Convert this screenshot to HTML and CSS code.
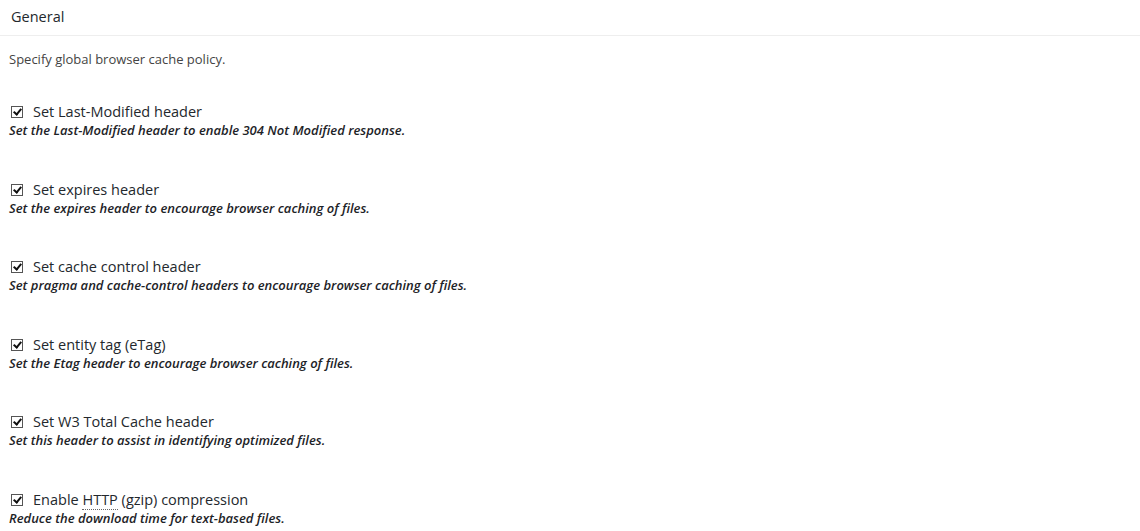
FILE: index.html
```html
<!DOCTYPE html>
<html lang="en">
<head>
  <meta charset="UTF-8" />
  <title>Browser Cache - General</title>
  <link rel="stylesheet" href="styles.css">
</head>
<body>
  <h3 class="box-title">General</h3>

  <div class="box-inside">
    <p class="intro">Specify global browser cache policy.</p>

    <div class="option">
      <label><span class="check"></span>Set Last-Modified header</label>
      <p class="description">Set the Last-Modified header to enable 304 Not Modified response.</p>
    </div>

    <div class="option">
      <label><span class="check"></span>Set expires header</label>
      <p class="description">Set the expires header to encourage browser caching of files.</p>
    </div>

    <div class="option">
      <label><span class="check"></span>Set cache control header</label>
      <p class="description">Set pragma and cache-control headers to encourage browser caching of files.</p>
    </div>

    <div class="option">
      <label><span class="check"></span>Set entity tag (eTag)</label>
      <p class="description">Set the Etag header to encourage browser caching of files.</p>
    </div>

    <div class="option">
      <label><span class="check"></span>Set W3 Total Cache header</label>
      <p class="description">Set this header to assist in identifying optimized files.</p>
    </div>

    <div class="option">
      <label><span class="check"></span>Enable <abbr title="Hypertext Transfer Protocol">HTTP</abbr> (gzip) compression</label>
      <p class="description">Reduce the download time for text-based files.</p>
    </div>
  </div>
</body>
</html>
```

FILE: styles.css
```css
body {
  margin: 0;
  font-family: "Open Sans", sans-serif;
  font-size: 13px;
  color: #444;
  background: #fff;
}

.box-title {
  margin: 0;
  padding: 7px 11px 9px;
  font-size: 14.5px;
  font-weight: normal;
  line-height: 19px;
  color: #23282d;
  border-bottom: 1px solid #eee;
}

.box-inside {
  padding: 0 9px;
}

.intro {
  margin: 13px 0 0;
  font-size: 13px;
  line-height: 20px;
}

.option {
  margin-top: 33px;
}

.option + .option {
  margin-top: 40.6px;
}

.option label {
  display: block;
  font-size: 14.5px;
  line-height: 20px;
  color: #23282d;
}

.check {
  position: relative;
  display: inline-block;
  vertical-align: -1px;
  width: 10px;
  height: 10px;
  margin: 0 10px 0 2px;
  border: 1px solid #555;
  background: #fff;
}

.check::after {
  content: "";
  position: absolute;
  left: 3px;
  top: 0px;
  width: 3px;
  height: 6px;
  border: solid #111;
  border-width: 0 2px 2px 0;
  transform: rotate(40deg);
}

abbr {
  text-decoration: none;
  border-bottom: 1px dotted #666;
}

.description {
  margin: -1px 0 0;
  font-size: 13px;
  font-style: italic;
  font-weight: 600;
  line-height: 18px;
  color: #1d2327;
}
```
